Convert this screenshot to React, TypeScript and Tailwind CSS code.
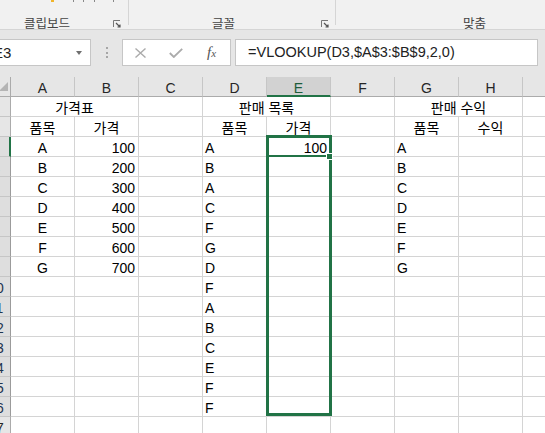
import React from "react";

type Cell = { t?: string; a?: "l" | "c" | "r"; span?: boolean };

const cols = ["A", "B", "C", "D", "E", "F", "G", "H", "I"];
const items = ["A", "B", "C", "D", "E", "F", "G"];
const sales = ["A", "B", "A", "C", "F", "G", "D", "F", "A", "B", "C", "E", "F", "F"];

function rowCells(r: number): Cell[] {
  if (r === 1)
    return [
      { t: "가격표", a: "c", span: true },
      {},
      { t: "판매 목록", a: "c", span: true },
      {},
      { t: "판매 수익", a: "c", span: true },
      {},
    ];
  if (r === 2)
    return [
      { t: "품목", a: "c" },
      { t: "가격", a: "c" },
      {},
      { t: "품목", a: "c" },
      { t: "가격", a: "c" },
      {},
      { t: "품목", a: "c" },
      { t: "수익", a: "c" },
      {},
    ];
  const i = r - 3;
  return [
    { t: items[i], a: "c" },
    { t: items[i] ? String((i + 1) * 100) : undefined, a: "r" },
    {},
    { t: sales[i], a: "l" },
    { t: r === 3 ? "100" : undefined, a: "r" },
    {},
    { t: items[i], a: "l" },
    {},
    {},
  ];
}

const alignClass = {
  l: "justify-start pl-[2px]",
  c: "justify-center",
  r: "justify-end pr-[3px]",
};

function Launcher() {
  return (
    <svg width="8" height="8" viewBox="0 0 8 8" className="shrink-0">
      <path d="M0.5 7V0.5H7" fill="none" stroke="#777" strokeWidth="1" />
      <path d="M3 3L7 7M7 4.5V7H4.5" fill="none" stroke="#555" strokeWidth="1.2" />
    </svg>
  );
}

function Ribbon() {
  return (
    <div className="h-[30px] shrink-0 bg-[#f1f1f1] border-b border-[#d5d5d5] flex text-[12.5px] text-[#444]">
      <div className="w-[128px] flex flex-col">
        <div className="h-[2px] flex items-start">
          <span className="ml-[51px] w-[3px] h-[2px] bg-[#f0b429]" />
          <span className="ml-[19px] w-px h-[2px] bg-[#888]" />
          <span className="ml-[9px] w-px h-[2px] bg-[#888]" />
          <span className="ml-[10px] w-px h-[2px] bg-[#888]" />
          <span className="ml-[18px] w-px h-[2px] bg-[#888]" />
        </div>
        <div className="flex items-center mt-[15px] h-[12px]">
          <span className="ml-[24px] leading-none">클립보드</span>
          <span className="ml-[43px] mt-[2px]"><Launcher /></span>
        </div>
      </div>
      <div className="w-px h-[25px] bg-[#d5d5d5]" />
      <div className="w-[206px] flex flex-col">
        <div className="flex items-center mt-[17px] h-[12px]">
          <span className="ml-[83px] leading-none">글꼴</span>
          <span className="ml-[86px] mt-[2px]"><Launcher /></span>
        </div>
      </div>
      <div className="w-px h-[25px] bg-[#d5d5d5]" />
      <div className="flex-1 flex flex-col">
        <div className="flex items-center mt-[17px] h-[12px]">
          <span className="ml-[127px] leading-none">맞춤</span>
        </div>
      </div>
    </div>
  );
}

function FormulaBar() {
  return (
    <div className="h-[47px] shrink-0 bg-[#e6e6e6] flex items-start pt-[9px] font-['Liberation_Sans',sans-serif]">
      <div className="ml-[-20px] w-[111px] h-[27px] bg-white border border-[#c6c6c6] flex items-center">
        <span className="pl-[12px] text-[15px] text-[#222] leading-none">E3</span>
        <svg width="6" height="4" viewBox="0 0 6 4" className="ml-auto mr-[8px]">
          <path d="M0 0H6L3 4Z" fill="#6f6f6f" />
        </svg>
      </div>
      <div className="w-[31px] h-[27px] flex flex-col items-center justify-center gap-[2.5px]">
        <span className="w-[2px] h-[2px] bg-[#a6a6a6]" />
        <span className="w-[2px] h-[2px] bg-[#a6a6a6]" />
        <span className="w-[2px] h-[2px] bg-[#a6a6a6]" />
      </div>
      <div className="w-[109px] h-[27px] bg-white border border-[#c6c6c6] flex items-center">
        <svg width="11" height="10" viewBox="0 0 11 10" className="ml-[12px]">
          <path d="M0.5 0.5L10.5 9.5M10.5 0.5L0.5 9.5" stroke="#ababab" strokeWidth="1.4" />
        </svg>
        <svg width="14" height="10" viewBox="0 0 14 10" className="ml-[23px]">
          <path d="M0.8 5L4.8 9L13.2 0.8" fill="none" stroke="#ababab" strokeWidth="1.8" />
        </svg>
        <span className="ml-[24px] font-['Liberation_Serif',serif] italic text-[#555] text-[15px] leading-none">
          f<span className="text-[11px]">x</span>
        </span>
      </div>
      <div className="ml-[4px] w-[303px] h-[27px] bg-white border border-[#c6c6c6] flex items-center">
        <span className="pl-[12px] text-[14.5px] text-[#222] leading-none">=VLOOKUP(D3,$A$3:$B$9,2,0)</span>
      </div>
    </div>
  );
}

function Sheet() {
  const rows = Array.from({ length: 17 }, (_, i) => i + 1);
  return (
    <div className="relative ml-[-18px] w-max grid grid-cols-[29px_repeat(9,64px)] font-['Liberation_Sans','Noto_Sans_CJK_KR',sans-serif] text-[14px] leading-[16px]">
      <div className="h-[20px] bg-[#e6e6e6] border-r border-b border-[#ababab] flex items-end justify-end pr-[2px] pb-[5px]">
        <svg width="9" height="9" viewBox="0 0 9 9">
          <path d="M9 0V9H0Z" fill="#b4b4b4" />
        </svg>
      </div>
      {cols.map((c) =>
        c === "E" ? (
          <div
            key={c}
            className="h-[20px] bg-[#d2d2d2] border-r border-[#c6c6c6] border-b-2 border-b-[#217346] flex justify-center pt-[3px] text-[#1e5c3a]"
          >
            {c}
          </div>
        ) : (
          <div
            key={c}
            className="h-[20px] bg-[#e6e6e6] border-r border-[#c6c6c6] border-b border-b-[#ababab] flex justify-center pt-[3px] text-[#262626]"
          >
            {c}
          </div>
        )
      )}
      {rows.map((r) => {
        const sel = r >= 3 && r <= 16;
        return (
          <React.Fragment key={r}>
            <div
              className={
                r === 3
                  ? "h-[20px] bg-[#dedede] border-b border-[#c6c6c6] border-r-2 border-r-[#217346] flex justify-center pt-[3px] text-[#1f3550]"
                  : sel
                  ? "h-[20px] bg-[#dedede] border-b border-[#c6c6c6] border-r border-r-[#9b9b9b] flex justify-center pt-[3px] text-[#1f3550]"
                  : "h-[20px] bg-[#e6e6e6] border-b border-[#c6c6c6] border-r border-r-[#ababab] flex justify-center pt-[3px] text-[#262626]"
              }
            >
              {r}
            </div>
            {rowCells(r).map((cell, j) => (
              <div
                key={j}
                className={`h-[20px] border-r border-b border-[#d4d4d4] flex items-start pt-[3px] text-black whitespace-nowrap ${
                  cell.span ? "col-span-2" : ""
                } ${alignClass[cell.a ?? "l"]}`}
              >
                {cell.t}
              </div>
            ))}
          </React.Fragment>
        );
      })}
      <div className="absolute left-[284px] top-[58px] w-[66px] h-[281px] border-[3px] border-[#217346]" />
      <div className="absolute left-[285px] top-[78px] w-[60px] h-[2px] bg-[#217346]" />
      <div className="absolute left-[344px] top-[76px] w-[7px] h-[7px] bg-[#217346] border border-white" />
    </div>
  );
}

export default function App() {
  return (
    <div className="w-[545px] h-[433px] overflow-hidden bg-white flex flex-col font-['Noto_Sans_CJK_KR',sans-serif]">
      <Ribbon />
      <FormulaBar />
      <Sheet />
    </div>
  );
}
